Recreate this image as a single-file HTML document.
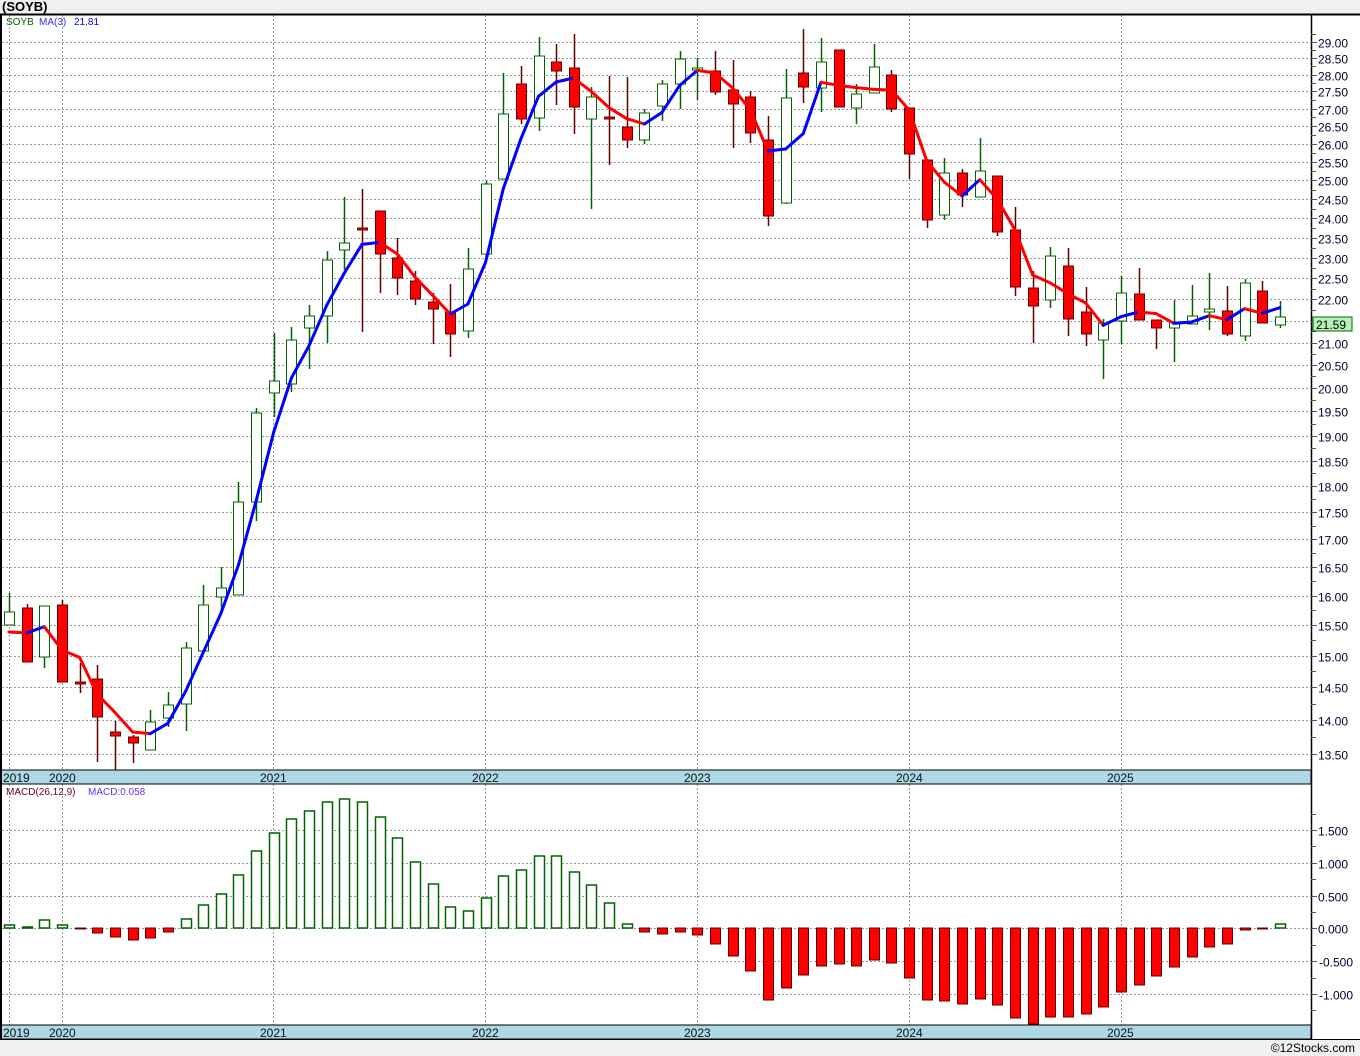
<!DOCTYPE html>
<html><head><meta charset="utf-8">
<style>
html,body{margin:0;padding:0;background:#f0f0f0;width:1360px;height:1056px;overflow:hidden;font-family:"Liberation Sans",sans-serif;}
svg{position:absolute;left:0;top:0;}
</style></head>
<body>
<svg id="c" width="1360" height="1056" xmlns="http://www.w3.org/2000/svg" font-family="Liberation Sans, sans-serif">
<rect x="0" y="0" width="1360" height="1056" fill="#f0f0f0"/>
<rect x="0" y="14" width="1360" height="1026" fill="#fff"/>
<text x="2" y="11" font-size="13" font-weight="bold" fill="#000">(SOYB)</text>
<g id="grid"></g>
<g id="cand"></g>
<g id="ma"></g>
<g id="macd"></g>
<rect x="1" y="770" width="1310" height="14" fill="#add8e6" stroke="#000" stroke-width="1"/>
<rect x="1" y="1025" width="1310" height="14" fill="#add8e6" stroke="#000" stroke-width="1"/>
<g font-size="12" fill="#111">
<text x="3" y="782">2019</text><text x="49" y="782">2020</text><text x="260" y="782">2021</text><text x="472" y="782">2022</text><text x="684" y="782">2023</text><text x="896" y="782">2024</text><text x="1107" y="782">2025</text>
<text x="3" y="1037">2019</text><text x="49" y="1037">2020</text><text x="260" y="1037">2021</text><text x="472" y="1037">2022</text><text x="684" y="1037">2023</text><text x="896" y="1037">2024</text><text x="1107" y="1037">2025</text>
</g>
<line x1="0" y1="14.5" x2="1360" y2="14.5" stroke="#000" stroke-width="2"/>
<line x1="1" y1="14" x2="1" y2="1040" stroke="#000" stroke-width="2"/>
<line x1="1311.5" y1="14" x2="1311.5" y2="1040" stroke="#000" stroke-width="1.5"/>
<line x1="0" y1="1039.5" x2="1360" y2="1039.5" stroke="#000" stroke-width="1"/>
<g id="axis" font-size="12" fill="#000033"></g>
<rect x="1313" y="317" width="39" height="14" fill="#b8f0b8" stroke="#006400" stroke-width="1"/>
<text x="1316" y="329" font-size="12" fill="#000">21.59</text>
<text x="6" y="25" font-size="10" fill="#006400">SOYB</text>
<text x="39" y="25" font-size="10" fill="#3333ff">MA(3)</text>
<text x="74" y="25" font-size="10" fill="#0000ff">21.81</text>
<text x="6" y="795" font-size="10" fill="#660033">MACD(26,12,9)</text>
<text x="88" y="795" font-size="10" fill="#6633ff">MACD:0.058</text>
<text x="1355" y="1052" font-size="12" fill="#000" text-anchor="end">©12Stocks.com</text>
</svg>
<script>
var NS="http://www.w3.org/2000/svg";
function el(p,t,a){var e=document.createElementNS(NS,t);for(var k in a)e.setAttribute(k,a[k]);p.appendChild(e);return e;}
var grid=document.getElementById('grid'),cand=document.getElementById('cand'),ma=document.getElementById('ma'),mg=document.getElementById('macd'),ax=document.getElementById('axis');
function py(p){return 42+Math.log(29/p)*931;}
for(var p=13.5;p<=29.001;p+=0.5){var y=Math.round(py(p))+0.5;el(grid,'line',{x1:2,y1:y,x2:1311,y2:y,stroke:'#999','stroke-dasharray':'2,2'});el(ax,'line',{x1:1311,y1:y,x2:1317,y2:y,stroke:'#555'});var t=el(ax,'text',{x:1318,y:y+5});t.textContent=p.toFixed(2);}
for(var p=13.25;p<=29.3;p+=0.5){var y=Math.round(py(p))+0.5;if(y<16||y>769)continue;el(ax,'line',{x1:1311,y1:y,x2:1316,y2:y,stroke:'#555'});}
var mz=928.4,mu=65.6;
[1.5,1,0.5,0,-0.5,-1].forEach(function(v){var y=Math.round(mz-v*mu)+0.5;el(grid,'line',{x1:2,y1:y,x2:1311,y2:y,stroke:'#999','stroke-dasharray':'2,2'});el(ax,'line',{x1:1311,y1:y,x2:1317,y2:y,stroke:'#555'});var t=el(ax,'text',{x:v<0?1319:1318,y:y+5});t.textContent=v.toFixed(3);});
for(var v=-1.25;v<=1.8;v+=0.5){var y=Math.round(mz-v*mu)+0.5;el(ax,'line',{x1:1311,y1:y,x2:1316,y2:y,stroke:'#555'});}
[9,62,273,485,697,909,1121].forEach(function(x){el(grid,'line',{x1:x+0.5,y1:15,x2:x+0.5,y2:770,stroke:'#999','stroke-dasharray':'2,2'});el(grid,'line',{x1:x+0.5,y1:784,x2:x+0.5,y2:1025,stroke:'#999','stroke-dasharray':'2,2'});});
var D=[['g',593,612,625,625],['r',604,608,662,662],['g',606,606,657,668],['r',600,605,682,682],['r',663,682,684,693],['r',665,679,717,762],['r',721,732,736,770],['r',735,737,743,763],['g',710,722,750,750],['g',692,705,718,727],['g',642,648,704,731],['g',585,605,651,651],['g',567,588,597,610],['g',482,502,595,595],['g',408,413,502,521],['g',333,381,393,417],['g',327,340,384,392],['g',305,316,328,369],['g',251,260,316,343],['g',197,243,250,270],['r',189,228,230,332],['r',211,211,254,293],['r',238,258,278,295],['r',271,281,299,305],['r',293,302,309,344],['r',284,312,334,357],['g',248,269,331,338],['g',181,184,254,254],['g',73,114,179,179],['r',66,84,119,124],['g',37,56,118,131],['r',44,62,71,105],['r',34,68,107,134],['g',87,97,119,209],['r',76,117,119,165],['r',77,127,140,148],['g',109,113,140,144],['g',80,84,106,121],['g',51,59,84,109],['g',58,68,70,100],['r',51,71,92,95],['r',60,90,104,148],['r',91,97,133,143],['r',116,140,216,226],['g',69,98,203,204],['r',29,73,87,103],['g',38,62,88,112],['r',50,50,107,107],['g',84,94,108,124],['g',44,67,93,93],['r',70,75,109,112],['r',108,108,154,179],['r',160,160,220,228],['g',158,173,215,220],['r',169,173,195,207],['g',138,171,197,197],['r',176,176,232,236],['r',207,230,287,296],['r',271,288,306,343],['g',247,256,300,308],['r',248,266,319,336],['r',287,312,334,346],['g',319,323,340,379],['g',276,293,321,344],['r',268,294,320,320],['r',320,320,328,349],['g',300,322,328,362],['g',285,316,324,324],['g',273,309,312,330],['r',286,311,334,336],['g',279,283,336,341],['r',281,291,323,323],['g',301,317,325,328]];
function X(i){return 9+i*17.65;}
var closes=[];
D.forEach(function(d,i){var x=Math.round(X(i))+0.5,g=d[0]=='g',wc=g?'#006400':'#660000';
el(cand,'line',{x1:x,y1:d[1],x2:x,y2:d[4],stroke:wc,'stroke-width':1.5});
var h=Math.max(d[3]-d[2],2);
el(cand,'rect',{x:x-5,y:d[2],width:10,height:h,fill:g?'#fff':'#ff0000',stroke:wc,'stroke-width':1});
closes.push(g?d[2]:d[3]);});
var M=[632,633];for(var i=2;i<closes.length;i++)M.push((closes[i]+closes[i-1]+closes[i-2])/3);
for(var i=1;i<M.length;i++){el(ma,'line',{x1:X(i-1),y1:M[i-1],x2:X(i),y2:M[i],stroke:M[i]<M[i-1]?'#0000ff':'#ff0000','stroke-width':3,'stroke-linecap':'round'});}
var H=[925,927,920,925,928,933,937,940,938,932,919,905,894,875,851,833,819,811,802,799,802,817,838,862,884,907,911,898,876,870,856,856,872,885,903,924,932,934,932,935,944,956,971,1000,988,975,966,964,966,960,963,978,1000,1001,1004,999,1005,1018,1024,1017,1017,1014,1007,992,985,976,967,957,947,944,930,928,924];
H.forEach(function(h,i){var x=Math.round(X(i))-5+0.5,z=928;
if(h<z){var ht=z-h;el(mg,'rect',{x:x,y:h,width:10,height:ht,fill:ht<3?'#006400':'#fff',stroke:'#006400','stroke-width':1.5});}
else{el(mg,'rect',{x:x,y:z,width:10,height:Math.max(h-z,1),fill:'#ff0000',stroke:'#660000','stroke-width':1});}});
</script>
</body></html>
